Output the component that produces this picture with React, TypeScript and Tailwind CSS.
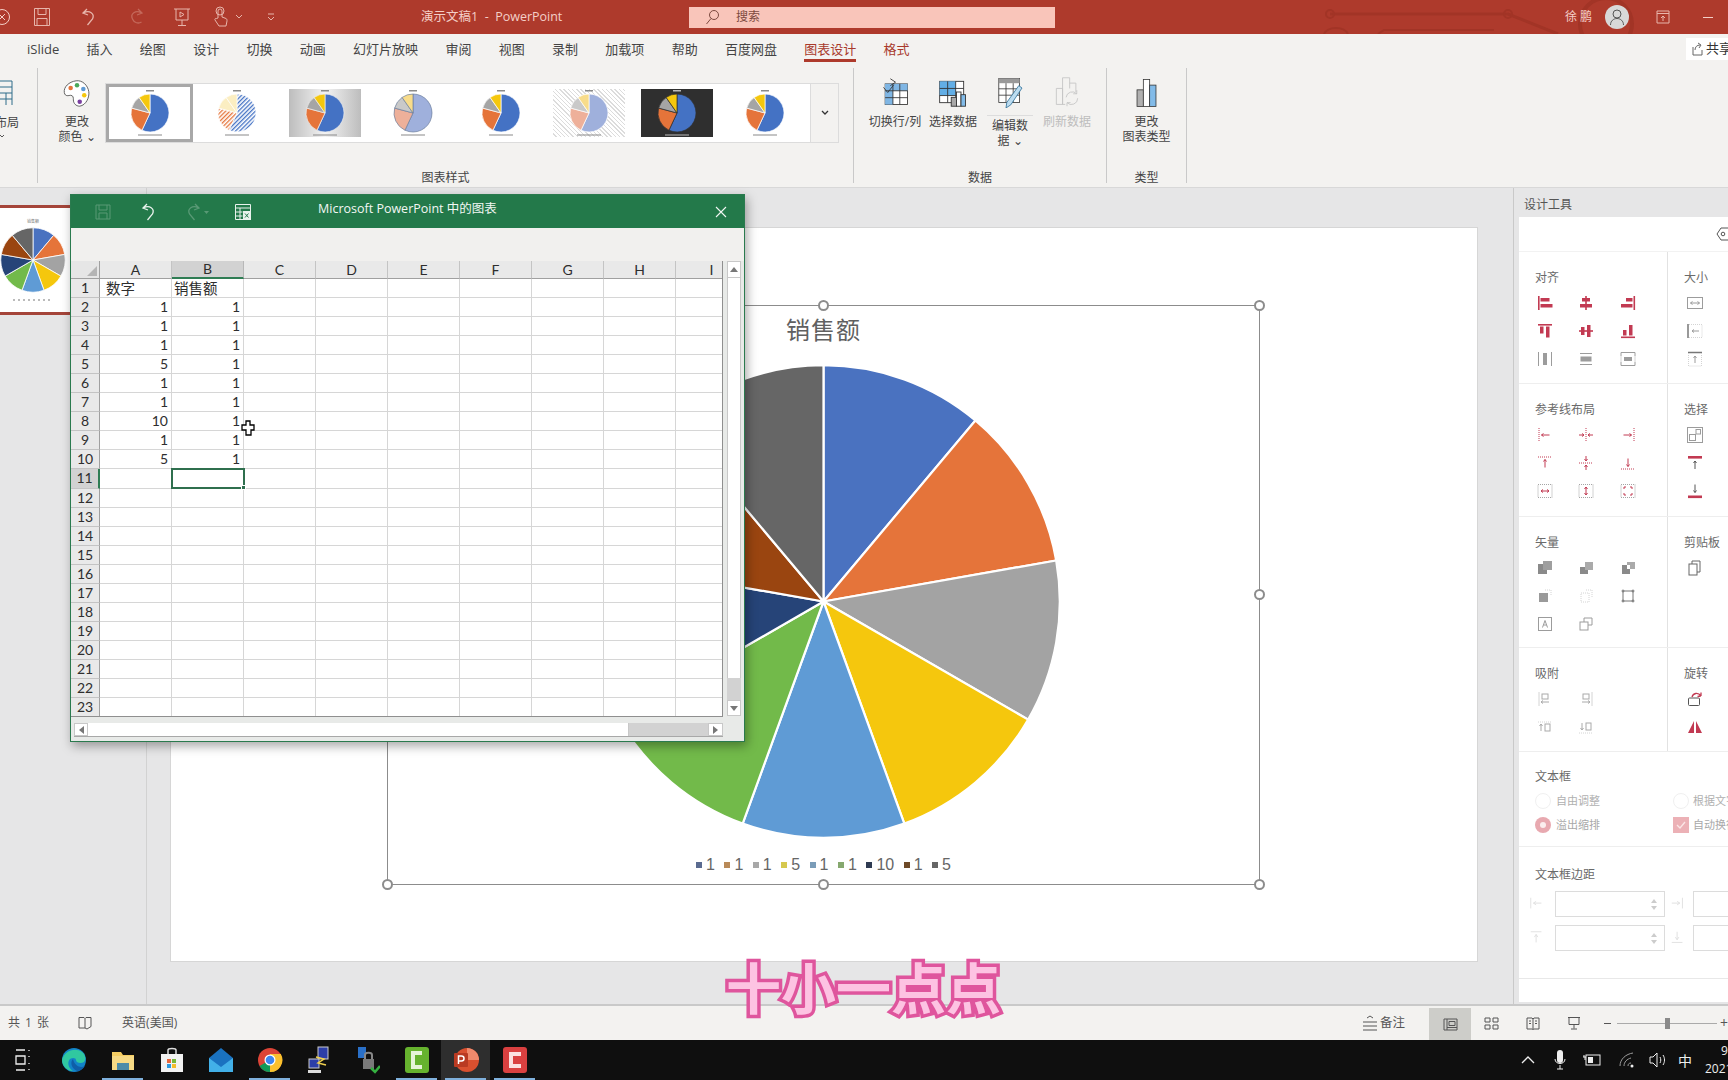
import React from 'react';

const TABS = ['iSlide', '插入', '绘图', '设计', '切换', '动画', '幻灯片放映', '审阅', '视图', '录制', '加载项', '帮助', '百度网盘'];
const PIE_COLORS = ['#4a72c0', '#e5743a', '#a3a3a3', '#f5c70d', '#5f9bd5', '#72ba4a', '#264478', '#9a4510', '#666666'];
const LEGEND = [
  ['1', 'bg-[#5a6b90]'], ['1', 'bg-[#b98a58]'], ['1', 'bg-[#a8a8a8]'], ['5', 'bg-[#d6c84e]'], ['1', 'bg-[#7a9cb8]'],
  ['1', 'bg-[#86a86e]'], ['10', 'bg-[#2f3b52]'], ['1', 'bg-[#6e4a28]'], ['5', 'bg-[#666666]'],
];
const COLUMNS = ['A', 'B', 'C', 'D', 'E', 'F', 'G', 'H', 'I'];
const COL_A = ['数字', '1', '1', '1', '5', '1', '1', '10', '1', '5'];
const COL_B = ['销售额', '1', '1', '1', '1', '1', '1', '1', '1', '1'];
const ROWS = Array.from({ length: 23 }, (_, i) => i + 1);

const R = '#c23a52';
const G = '#9c9c9c';
const L = '#d4d4d4';

function slicePath(cx: number, cy: number, r: number, from: number, to: number) {
  const a = ((from - 90) * Math.PI) / 180;
  const b = ((to - 90) * Math.PI) / 180;
  const large = to - from > 180 ? 1 : 0;
  return `M${cx} ${cy}L${cx + r * Math.cos(a)} ${cy + r * Math.sin(a)}A${r} ${r} 0 ${large} 1 ${cx + r * Math.cos(b)} ${cy + r * Math.sin(b)}Z`;
}

function NinePie({ size, line }: { size: number; line: number }) {
  const c = size / 2;
  return (
    <svg width={size} height={size} className="block">
      {PIE_COLORS.map((color, i) => (
        <path key={color} d={slicePath(c, c, c - line, i * 40, (i + 1) * 40)} fill={color} stroke="#fff" strokeWidth={line} />
      ))}
    </svg>
  );
}

function MiniPie({ r = 19, faded = false, striped = false, edge, mark = '#8a8a8a' }: { r?: number; faded?: boolean; striped?: boolean; edge?: string; mark?: string }) {
  const parts = [
    [0, 205, faded ? '#9fb0dc' : '#4472c4'],
    [205, 285, faded ? '#eeb09a' : '#e5743a'],
    [285, 325, faded ? '#c9c9c9' : '#a5a5a5'],
    [325, 360, faded ? '#f8dc8a' : '#f5c70d'],
  ] as [number, number, string][];
  const c = 24;
  return (
    <svg width={48} height={48} className="block">
      <defs>
        <pattern id="stripes" width="3" height="3" patternUnits="userSpaceOnUse" patternTransform="rotate(45)">
          <rect width="3" height="3" fill="#fff" />
          <rect width="1.3" height="3" fill="#4472c4" />
        </pattern>
        <pattern id="stripesOrange" width="3" height="3" patternUnits="userSpaceOnUse" patternTransform="rotate(45)">
          <rect width="3" height="3" fill="#fff" />
          <rect width="1.3" height="3" fill="#e5743a" />
        </pattern>
      </defs>
      <rect x="20" y="1" width="8" height="1.5" fill={mark} />
      <rect x="12" y="45.5" width="24" height="1" fill={mark} />
      {parts.map(([a, b, color]) => (
        <path key={a} d={slicePath(c, c, r, a, b)} fill={striped ? (a === 0 ? 'url(#stripes)' : a === 205 ? 'url(#stripesOrange)' : '#fbeec2') : color} stroke={edge ?? '#fff'} strokeWidth="0.7" />
      ))}
    </svg>
  );
}

function GalleryItem({ box, children }: { box: string; children: React.ReactNode }) {
  return <div className="w-[88px] h-full flex items-center justify-center shrink-0"><div className={`w-[72px] h-[48px] flex items-center justify-center ${box}`}>{children}</div></div>;
}

function Ic({ children, size = 18 }: { children: React.ReactNode; size?: number }) {
  return <svg width={size} height={size} viewBox="0 0 18 18" fill="none" className="block">{children}</svg>;
}

const ALIGN_ICONS = [
  <><rect x="2" y="2" width="1.6" height="14" fill={R} /><rect x="4.5" y="4" width="9" height="3.5" fill={R} /><rect x="4.5" y="10" width="12" height="3.5" fill={R} /></>,
  <><rect x="8.2" y="2" width="1.6" height="14" fill={R} /><rect x="5" y="4" width="8" height="3.5" fill={R} /><rect x="3" y="10" width="12" height="3.5" fill={R} /></>,
  <><rect x="14.5" y="2" width="1.6" height="14" fill={R} /><rect x="7" y="4" width="6.5" height="3.5" fill={R} /><rect x="2" y="10" width="11.5" height="3.5" fill={R} /></>,
  <><rect x="2" y="2" width="14" height="1.6" fill={R} /><rect x="4" y="4.5" width="3.5" height="7" fill={R} /><rect x="10" y="4.5" width="3.5" height="11" fill={R} /></>,
  <><rect x="2" y="8.2" width="14" height="1.6" fill={R} /><rect x="4" y="5" width="3.5" height="8" fill={R} /><rect x="10" y="3" width="3.5" height="12" fill={R} /></>,
  <><rect x="2" y="14.5" width="14" height="1.6" fill={R} /><rect x="4" y="8" width="3.5" height="5.5" fill={R} /><rect x="10" y="3" width="3.5" height="10.5" fill={R} /></>,
  <><path d="M2.5 2v14M15.5 2v14" stroke={G} /><rect x="7" y="3" width="4" height="12" fill={G} /></>,
  <><path d="M3 3.5h12M3 14.5h12" stroke={G} /><rect x="3.5" y="6.5" width="11" height="5" fill={G} /></>,
  <><path d="M2 6V2.5h14V6M2 12v3.5h14V12" stroke={G} /><path d="M2 6v6M16 6v6" stroke={L} /><rect x="5" y="7" width="8" height="4" fill={G} /></>,
];
const SIZE_ICONS = [
  <><rect x="1.5" y="3.5" width="15" height="11" stroke={G} /><path d="M4.5 9h9M4.5 9l2-1.5M4.5 9l2 1.5M13.5 9l-2-1.5M13.5 9l-2 1.5" stroke={G} /></>,
  <><path d="M2 2v14" stroke="#777" strokeWidth="1.5" /><path d="M3 2.5h13v13H3" stroke={L} strokeDasharray="1 1" /><path d="M6 9h7M6 9l2-1.5M6 9l2 1.5" stroke={G} /></>,
  <><path d="M2 2.5h14" stroke="#777" strokeWidth="1.5" /><path d="M2.5 3v13h13V3" stroke={L} strokeDasharray="1 1" /><path d="M9 6v7M9 6L7.5 8M9 6l1.500 2" stroke={G} /></>,
];
const GUIDE_ICONS = [
  <><path d="M3 2v14" stroke={R} strokeDasharray="1 1" /><path d="M5.5 9h8M5.5 9l2-1.5M5.5 9l2 1.5" stroke={R} /></>,
  <><path d="M9 2v14" stroke={R} strokeDasharray="1 1" /><path d="M2 9h5M7 9L5 7.5M7 9l-2 1.5M16 9h-5M11 9l2-1.5M11 9l2 1.5" stroke={R} /></>,
  <><path d="M15 2v14" stroke={R} strokeDasharray="1 1" /><path d="M4.5 9h8M12.5 9l-2-1.5M12.5 9l-2 1.5" stroke={R} /></>,
  <><path d="M2 3h14" stroke={R} strokeDasharray="1 1" /><path d="M9 5.5v8M9 5.5L7.5 7.5M9 5.5l1.5 2" stroke={R} /></>,
  <><path d="M2 9h14" stroke={R} strokeDasharray="1 1" /><path d="M9 2v5M9 7L7.5 5M9 7l1.5-2M9 16v-5M9 11l-1.5 2M9 11l1.5 2" stroke={R} /></>,
  <><path d="M2 15h14" stroke={R} strokeDasharray="1 1" /><path d="M9 4.5v8M9 12.5l-1.5-2M9 12.5l1.5-2" stroke={R} /></>,
  <><rect x="2" y="2.5" width="14" height="13" stroke="#a5a5a5" strokeDasharray="1 1" /><path d="M5 9h8M5 9l2-1.5M5 9l2 1.5M13 9l-2-1.5M13 9l-2 1.5" stroke={R} /></>,
  <><rect x="2" y="2.5" width="14" height="13" stroke="#a5a5a5" strokeDasharray="1 1" /><path d="M9 5v8M9 5L7.5 7M9 5l1.5 2M9 13l-1.5-2M9 13l1.5-2" stroke={R} /></>,
  <><rect x="2" y="2.5" width="14" height="13" stroke="#a5a5a5" strokeDasharray="1 1" /><path d="M5 7V5h2M13 7V5h-2M5 11v2h2M13 11v2h-2" stroke={R} /></>,
];
const SELECT_ICONS = [
  <><rect x="1.5" y="1.5" width="15" height="15" stroke={G} /><rect x="3.5" y="8.5" width="6" height="6" stroke={G} /><rect x="10" y="3.5" width="4.5" height="4.5" stroke={G} /></>,
  <><rect x="2" y="2" width="14" height="2.6" fill={R} /><path d="M9 7v8M9 7L7.5 9M9 7l1.5 2" stroke="#555" /></>,
  <><rect x="2" y="13.5" width="14" height="2.6" fill={R} /><path d="M9 2.5v8M9 10.5L7.5 8.5M9 10.5l1.5-2" stroke="#555" /></>,
];
const VECTOR_ICONS = [
  <><rect x="2" y="5" width="9" height="10" fill="#8a8a8a" /><rect x="7" y="2" width="9" height="9" fill="#9f9f9f" /></>,
  <><rect x="3" y="8" width="8" height="7" fill="#8a8a8a" /><rect x="8" y="3" width="8" height="8" fill="#aaaaaa" /></>,
  <><rect x="3" y="6" width="8" height="9" fill="#8a8a8a" /><rect x="8" y="3" width="8" height="7" fill="#aaaaaa" /><rect x="8" y="6" width="3" height="4" fill="#fff" /></>,
  <><rect x="3" y="6" width="9" height="9" fill="#9a9a9a" /><path d="M9 3h6v6" stroke={L} strokeDasharray="1 1" /></>,
  <><rect x="4" y="6" width="8" height="9" stroke={L} strokeDasharray="1 1" /><path d="M9 3h6v7" stroke={L} strokeDasharray="1 1" /></>,
  <><rect x="4" y="4" width="10" height="10" stroke="#777" /><path d="M2.5 4h3M12.5 4h3M2.5 14h3M12.5 14h3M4 2.5v3M14 2.5v3M4 12.5v3M14 12.5v3" stroke="#777" /></>,
  <><rect x="2.5" y="2.5" width="13" height="13" stroke={G} /><path d="M6.5 12.5L9 5.5l2.5 7M7.5 10h3" stroke={G} /></>,
  <><rect x="3" y="7" width="8" height="8" stroke={G} /><path d="M7 7V3h8v7h-4" stroke={G} /></>,
];
const SNAP_ICONS = [
  <><path d="M3 2v14" stroke={L} /><rect x="6" y="4" width="6" height="5" stroke="#aaa" /><path d="M5 12h8M5 12l2-1.5M5 12l2 1.5" stroke="#aaa" /></>,
  <><path d="M15 2v14" stroke={L} /><rect x="6" y="4" width="6" height="5" stroke="#aaa" /><path d="M5 12h8M13 12l-2-1.5M13 12l-2 1.5" stroke="#aaa" /></>,
  <><path d="M2 4h14" stroke={L} strokeDasharray="1 1" /><rect x="9" y="6" width="5" height="7" stroke="#aaa" /><path d="M5 6v7M5 6L3.5 8M5 6l1.5 2" stroke="#aaa" /></>,
  <><path d="M2 15h14" stroke={L} strokeDasharray="1 1" /><rect x="9" y="5" width="5" height="7" stroke="#aaa" /><path d="M5 5v7M5 12l-1.5-2M5 12l1.5-2" stroke="#aaa" /></>,
];
const ROTATE_ICONS = [
  <><rect x="2.5" y="8" width="11" height="7.5" rx="1" stroke="#555" /><path d="M6 7c1-4 6-5 9-1M15 6V2.5M15 6l-3.5.5" stroke={R} strokeWidth="1.3" /></>,
  <><path d="M8 3v12H2zM10 3v12h6z" fill={R} /></>,
];

function IconGrid({ icons, cols, pad }: { icons: React.ReactNode[]; cols: string; pad: string }) {
  return (
    <div className={`grid auto-rows-[28px] ${cols} ${pad}`}>
      {icons.map((icon, i) => <div key={i} className="flex items-center justify-center"><Ic>{icon}</Ic></div>)}
    </div>
  );
}

function ToolSection({ h, title, icons, title2, icons2 }: { h: string; title: string; icons: React.ReactNode[]; title2: string; icons2: React.ReactNode[] }) {
  return (
    <div className={`flex border-b border-[#eeeeee] shrink-0 ${h}`}>
      <div className="w-[149px] shrink-0 border-r border-[#e2e2e2] pt-[17px]">
        <div className="pl-[16px] h-[18px] leading-[18px] text-[12px] text-[#6a6a6a]">{title}</div>
        <IconGrid icons={icons} cols="grid-cols-[41.5px_41.5px_41.5px]" pad="pl-[5px] mt-[2px]" />
      </div>
      <div className="flex-1 pt-[17px]">
        <div className="pl-[16px] h-[18px] leading-[18px] text-[12px] text-[#6a6a6a]">{title2}</div>
        <IconGrid icons={icons2} cols="grid-cols-[41.5px]" pad="pl-[6px] mt-[2px]" />
      </div>
    </div>
  );
}

function Spin({ left, w, slot }: { left: React.ReactNode; w: string; slot: string }) {
  return (
    <div className="flex items-center shrink-0">
      <div className={slot}><Ic size={16}>{left}</Ic></div>
      <div className={`h-[26px] border border-[#dcdcdc] flex flex-col items-end justify-center pr-[7px] gap-[3px] ${w}`}>
        <div className="w-0 h-0 border-x-[3px] border-x-transparent border-b-[4px] border-b-[#cccccc]" />
        <div className="w-0 h-0 border-x-[3px] border-x-transparent border-t-[4px] border-t-[#cccccc]" />
      </div>
    </div>
  );
}

function DesignPanel() {
  return (
    <div className="w-[215px] shrink-0 border-l border-[#c9c9c9] pl-[5px] flex flex-col h-full overflow-hidden">
      <div className="h-[29px] leading-[34px] pl-[5px] text-[12px] text-[#555555] shrink-0">设计工具</div>
      <div className="bg-white flex-1 flex flex-col min-h-0 mb-[2px]">
        <div className="h-[35px] flex items-center justify-end border-b border-[#f2f2f2] shrink-0 overflow-hidden">
          <svg width="12" height="16" viewBox="0 0 12 16" fill="none" className="block"><path d="M12 2H5L1 8l4 6h7" stroke="#555" /><circle cx="7" cy="8" r="1.8" stroke="#555" /></svg>
        </div>
        <ToolSection h="h-[132px]" title="对齐" icons={ALIGN_ICONS} title2="大小" icons2={SIZE_ICONS} />
        <ToolSection h="h-[133px]" title="参考线布局" icons={GUIDE_ICONS} title2="选择" icons2={SELECT_ICONS} />
        <ToolSection h="h-[131px]" title="矢量" icons={VECTOR_ICONS} title2="剪贴板" icons2={[<><rect x="3" y="5" width="8" height="11" stroke="#666" /><path d="M6 5V2h8v11h-3" stroke="#666" /></>]} />
        <ToolSection h="h-[104px]" title="吸附" icons={[SNAP_ICONS[0], SNAP_ICONS[1], <></>, SNAP_ICONS[2], SNAP_ICONS[3]]} title2="旋转" icons2={ROTATE_ICONS} />
        <div className="h-[95px] border-b border-[#eeeeee] pt-[16px] pl-[16px] shrink-0 overflow-hidden">
          <div className="h-[18px] leading-[18px] text-[12px] text-[#6a6a6a]">文本框</div>
          <div className="flex items-center h-[24px] mt-[3px] text-[11px] text-[#b0b0b0] w-[300px]">
            <div className="w-[16px] h-[16px] rounded-full border border-[#f0f0f0] shrink-0" />
            <span className="ml-[5px] w-[117px] shrink-0">自由调整</span>
            <div className="w-[16px] h-[16px] rounded-full border border-[#f0f0f0] shrink-0" />
            <span className="ml-[4px] whitespace-nowrap">根据文字调整</span>
          </div>
          <div className="flex items-center h-[24px] text-[11px] text-[#a8a8a8] w-[300px]">
            <div className="w-[16px] h-[16px] rounded-full bg-[#e8a9b0] flex items-center justify-center shrink-0"><div className="w-[6px] h-[6px] rounded-full bg-[#fbeeee]" /></div>
            <span className="ml-[5px] w-[117px] shrink-0">溢出缩排</span>
            <div className="w-[16px] h-[16px] bg-[#ecb1b6] flex items-center justify-center shrink-0">
              <svg width="12" height="12" viewBox="0 0 12 12" fill="none"><path d="M2 6l3 3 5-6" stroke="#fbe6e6" strokeWidth="1.4" /></svg>
            </div>
            <span className="ml-[4px] whitespace-nowrap">自动换行</span>
          </div>
        </div>
        <div className="h-[132px] border-b border-[#e8e8e8] pt-[19px] shrink-0 overflow-hidden">
          <div className="pl-[16px] h-[18px] leading-[18px] text-[12px] text-[#6a6a6a]">文本框边距</div>
          <div className="flex mt-[7px] w-[320px]">
            <Spin slot="w-[36px] pl-[10px]" w="w-[110px]" left={<path d="M2 2v12M14 8H5M5 8l3-2M5 8l3 2" stroke="#dedede" />} />
            <Spin slot="w-[28px] pl-[5px]" w="w-[110px]" left={<path d="M14 2v12M2 8h9M11 8L8 6M11 8l-3 2" stroke="#dedede" />} />
          </div>
          <div className="flex mt-[8px] w-[320px]">
            <Spin slot="w-[36px] pl-[10px]" w="w-[110px]" left={<path d="M2 2h12M8 14V5M8 5L6 8M8 5l2 3" stroke="#dedede" />} />
            <Spin slot="w-[28px] pl-[5px]" w="w-[110px]" left={<path d="M2 14h12M8 2v9M8 11L6 8M8 11l2-3" stroke="#dedede" />} />
          </div>
        </div>
      </div>
    </div>
  );
}

function ExcelWindow() {
  return (
    <div className="absolute left-[70px] top-[194px] w-[675px] h-[548px] bg-[#e8eae8] border border-[#2a7a4e] shadow-[2px_4px_10px_rgba(0,0,0,0.35)] flex flex-col font-['Lato','Noto_Sans_CJK_SC',sans-serif]">
      <div className="h-[33px] bg-[#23794a] flex items-center shrink-0 text-[#f2f7f4] relative">
        <div className="ml-[23px] opacity-30"><svg width="18" height="18" viewBox="0 0 18 18" fill="none"><path d="M2 2h14v14H2zM5 2v5h8V2M5 16v-6h8v6" stroke="#d5e5da" /></svg></div>
        <div className="ml-[28px]"><svg width="18" height="20" viewBox="0 0 18 20" fill="none"><path d="M7 2L3 6l5 2M3.5 6c6-3.5 11.500 1 9 6l-5 6" stroke="#e8f2ec" strokeWidth="1.3" /></svg></div>
        <div className="ml-[26px] opacity-30"><svg width="28" height="20" viewBox="0 0 28 20" fill="none"><path d="M11 2l4 4-5 2M14.500 6C8.500 2.500 3 7 5.500 12l5 6" stroke="#d5e5da" strokeWidth="1.3" /><path d="M20 9h5l-2.500 3z" fill="#d5e5da" /></svg></div>
        <div className="ml-[22px]"><svg width="18" height="18" viewBox="0 0 18 18" fill="none"><path d="M1.500 1.500h15v15h-15zM1.500 5h15M1.500 9h7M1.500 13h7M6 5v11" stroke="#e8f2ec" /><rect x="9" y="8" width="8" height="9" fill="#e8f2ec" /><path d="M11 10.500l3.500 4M14.500 10.500l-3.500 4" stroke="#23794a" /></svg></div>
        <div className="absolute left-[247px] top-[5px] text-[12.5px] font-['Open_Sans','Noto_Sans_CJK_SC',sans-serif] whitespace-nowrap">Microsoft PowerPoint 中的图表</div>
        <div className="ml-auto mr-[17px]"><svg width="12" height="12" viewBox="0 0 12 12" fill="none"><path d="M1 1l10 10M11 1L1 11" stroke="#f2f7f4" strokeWidth="1.1" /></svg></div>
      </div>
      <div className="h-[33px] bg-[#f1f0ee] shrink-0" />
      <div className="flex h-[456px] bg-white shrink-0">
        <div className="w-[652px] h-full overflow-hidden relative border-r border-b border-[#8f8f8f]">
          <div className="grid grid-cols-[29px_repeat(9,72px)] grid-rows-[18px] auto-rows-[19.05px] w-[680px] text-[14px] text-[#2e2e2e]">
            <div className="bg-[#e6e6e6] border-r border-b border-[#a0a0a0] flex items-end justify-end pr-[2px] pb-[2px]">
              <div className="w-0 h-0 border-l-[10px] border-l-transparent border-b-[10px] border-b-[#b5b5b5]" />
            </div>
            {COLUMNS.map((c) => (
              <div key={c} className={c === 'B' ? 'bg-[#d2d2d2] border-r border-[#b8b8b8] border-b-2 border-b-[#2f7d54] flex items-center justify-center leading-none' : 'bg-[#e9e9e9] border-r border-[#c4c4c4] border-b border-b-[#a0a0a0] flex items-center justify-center leading-none'}>{c}</div>
            ))}
            {ROWS.map((row) => (
              <React.Fragment key={row}>
                <div className={row === 11 ? 'bg-[#d2d2d2] border-b border-[#c4c4c4] border-r-2 border-r-[#2f7d54] flex items-center justify-center leading-none' : 'bg-[#e9e9e9] border-b border-[#c4c4c4] border-r border-r-[#a0a0a0] flex items-center justify-center leading-none'}>{row}</div>
                {COLUMNS.map((c) => {
                  const source = c === 'A' ? COL_A : c === 'B' ? COL_B : null;
                  const text = source && row <= 10 ? source[row - 1] : '';
                  const align = row === 1 ? (c === 'A' ? 'pl-[6px] justify-start' : 'pl-[2px] justify-start') : 'pr-[3px] justify-end';
                  return (
                    <div key={c} className={`border-r border-b border-[#d6d6d6] flex items-center leading-none ${align}`}>
                      <span className={row === 1 ? "text-[14.5px] font-['Noto_Sans_CJK_SC',sans-serif]" : ''}>{text}</span>
                    </div>
                  );
                })}
              </React.Fragment>
            ))}
          </div>
          <div className="absolute left-[100px] top-[207px] w-[74px] h-[21px] border-2 border-[#2f6f4e]">
            <div className="absolute -right-[3px] -bottom-[3px] w-[5px] h-[5px] bg-[#2f6f4e] border border-white" />
          </div>
          <svg width="14" height="16" viewBox="0 0 14 16" className="absolute left-[170px] top-[159px]"><path d="M5 1h4v4h4v5h-3v5H5v-5H1V5h4z" fill="#fff" stroke="#000" strokeWidth="1.3" /></svg>
        </div>
        <div className="flex-1 bg-[#e8eae8] pl-[4px] pr-[3px] flex flex-col">
          <div className="h-[17px] bg-white border border-[#c8c8c8] flex items-center justify-center"><div className="w-0 h-0 border-x-[4px] border-x-transparent border-b-[5px] border-b-[#777777]" /></div>
          <div className="h-[400px] bg-white border-x border-[#c8c8c8]" />
          <div className="flex-1 bg-[#d2d2d2]" />
          <div className="h-[16px] bg-white border border-[#c8c8c8] flex items-center justify-center mb-[1px]"><div className="w-0 h-0 border-x-[4px] border-x-transparent border-t-[5px] border-t-[#777777]" /></div>
        </div>
      </div>
      <div className="flex h-[14px] ml-[3px] w-[649px] mt-[6px] shrink-0 border-b border-[#a8a8a8]">
        <div className="w-[14px] bg-white border border-[#c8c8c8] flex items-center justify-center"><div className="w-0 h-0 border-y-[4px] border-y-transparent border-r-[5px] border-r-[#777777]" /></div>
        <div className="w-[541px] bg-white border-r border-[#c8c8c8]" />
        <div className="flex-1 bg-[#d2d2d2]" />
        <div className="w-[15px] bg-white border border-[#c8c8c8] flex items-center justify-center"><div className="w-0 h-0 border-y-[4px] border-y-transparent border-l-[5px] border-l-[#777777]" /></div>
      </div>
    </div>
  );
}

function Handle({ pos }: { pos: string }) {
  return <div className={`absolute w-[11px] h-[11px] rounded-full bg-white border-2 border-[#8c8c8c] ${pos}`} />;
}

function TitleBar() {
  const W = '#e7b5ab';
  return (
    <div className="h-[34px] bg-[#ae3a2c] flex items-center relative overflow-hidden shrink-0 text-[#f4cfc7]">
      <svg width="420" height="34" viewBox="0 0 420 34" fill="none" className="absolute left-[1308px] top-0">
        <path d="M22 14H200L250 34" stroke="#a23426" strokeWidth="3" /><circle cx="22" cy="14" r="4" stroke="#a23426" strokeWidth="2" /><circle cx="200" cy="14" r="4" stroke="#a23426" strokeWidth="2" />
        <path d="M16 34c4-8 20-8 24 0M70 34l6-4h110" stroke="#a23426" strokeWidth="2" /><circle cx="298" cy="24" r="26" stroke="#a23426" strokeWidth="4" />
      </svg>
      <div className="w-[18px] h-[34px] overflow-hidden flex items-center justify-end shrink-0 relative">
        <svg width="18" height="18" viewBox="0 0 18 18" fill="none" className="absolute -left-[7px]"><circle cx="9" cy="9" r="7.5" stroke="#f4cfc7" /><path d="M6 6l6 6M12 6l-6 6" stroke="#f4cfc7" /></svg>
      </div>
      <div className="w-[47px] flex justify-center shrink-0"><svg width="18" height="20" viewBox="0 0 18 20" fill="none"><path d="M1.500 1.500h15v17h-15zM5 1.500v6h8v-6M4 18.500v-7h10v7" stroke={W} /></svg></div>
      <div className="w-[47px] flex justify-center shrink-0"><svg width="18" height="20" viewBox="0 0 18 20" fill="none"><path d="M7 2L3 6l5 2M3.500 6c6-3.500 11.500 1 9 6l-5 6" stroke={W} strokeWidth="1.3" /></svg></div>
      <div className="w-[47px] flex justify-center shrink-0"><svg width="18" height="20" viewBox="0 0 18 20" fill="none"><path d="M11 2l4 4-5 2M14.500 6C8.500 2.500 3 7 5.500 12c1.500 4 6 5 9 3" stroke="#c4685a" strokeWidth="1.3" /></svg></div>
      <div className="w-[46px] flex justify-center shrink-0"><svg width="18" height="20" viewBox="0 0 18 20" fill="none"><path d="M1 2h16M3 2v11h12V2M9 13v5M5 18.500h8" stroke={W} /><path d="M7 5l4 2.500L7 10z" stroke={W} /></svg></div>
      <div className="w-[30px] pl-[6px] shrink-0"><svg width="18" height="22" viewBox="0 0 18 22" fill="none"><path d="M7 12V5a2 2 0 014 0v6l4 1.500c1 .500 1 1.500 1 2.500l-1 5H8l-4-6c-.500-1 .500-2 1.500-1.500z" stroke={W} /><circle cx="9" cy="5" r="4" stroke={W} /></svg></div>
      <svg width="8" height="6" viewBox="0 0 8 6" fill="none" className="shrink-0"><path d="M1 1l3 3 3-3" stroke={W} /></svg>
      <div className="ml-[24px] shrink-0"><svg width="8" height="9" viewBox="0 0 8 9" fill="none"><path d="M1 1h6M1 4l3 3 3-3" stroke={W} /></svg></div>
      <div className="ml-[146px] w-[268px] text-[12.5px] whitespace-nowrap shrink-0">演示文稿1&nbsp; -&nbsp; PowerPoint</div>
      <div className="w-[366px] h-[21px] bg-[#f9c5ba] flex items-center pl-[16px] shrink-0">
        <svg width="14" height="16" viewBox="0 0 14 16" fill="none"><circle cx="9" cy="6" r="4.500" stroke="#7d4a40" /><path d="M6 9.500L1.500 15" stroke="#7d4a40" /></svg>
        <span className="ml-[17px] text-[12px] text-[#7d4a40]">搜索</span>
      </div>
      <div className="ml-[510px] text-[12px] tracking-[3px] whitespace-nowrap shrink-0 relative">徐鹏</div>
      <div className="ml-[10px] w-[24px] h-[24px] rounded-full bg-[#d8d8d8] flex items-center justify-center shrink-0 relative">
        <svg width="16" height="18" viewBox="0 0 16 18" fill="none"><circle cx="8" cy="6" r="4" stroke="#555" /><path d="M1.500 17c0-4 3-6.500 6.500-6.500s6.500 2.500 6.500 6.500" stroke="#555" /></svg>
      </div>
      <div className="ml-[27px] shrink-0 relative"><svg width="14" height="14" viewBox="0 0 14 14" fill="none"><path d="M1 1h12v12H1zM1 3.500h12M7 11V6M7 6L5 8M7 6l2 2" stroke={W} /></svg></div>
      <div className="ml-[33px] w-[10px] h-px bg-[#f4cfc7] shrink-0 relative" />
    </div>
  );
}

function RibbonTabs() {
  return (
    <div className="h-[30px] flex items-stretch pl-[27px] gap-[27.3px] text-[13px] text-[#444444] shrink-0">
      {TABS.map((t) => <div key={t} className="flex items-center pt-[1px] whitespace-nowrap">{t}</div>)}
      <div className="flex items-center pt-[1px] text-[#a8392b] relative whitespace-nowrap">
        图表设计
        <div className="absolute left-0 right-0 top-[25px] h-[3px] bg-[#ae3a2c]" />
      </div>
      <div className="flex items-center pt-[1px] text-[#a8392b] whitespace-nowrap">格式</div>
      <div className="ml-auto mt-[4px] h-[22px] w-[42px] bg-white flex items-center pl-[6px] overflow-hidden shrink-0">
        <svg width="12" height="14" viewBox="0 0 12 14" fill="none" className="shrink-0"><path d="M1 5v8h9V8M3 8c0-3 2-5 5-5M6 1l3 2-2 3" stroke="#666" /></svg>
        <span className="ml-[2px] whitespace-nowrap text-[13px] text-[#333333]">共享</span>
      </div>
    </div>
  );
}

function RibbonBtn({ w, children, label, faded }: { w: string; children: React.ReactNode; label: React.ReactNode; faded?: boolean }) {
  return (
    <div className={`flex flex-col items-center shrink-0 ${w}`}>
      <div className="h-[38px] flex items-end justify-center">{children}</div>
      <div className={`mt-[6px] text-center text-[12px] leading-[15px] whitespace-nowrap ${faded ? 'text-[#bdbdbd]' : 'text-[#444444]'}`}>{label}</div>
    </div>
  );
}

function Ribbon() {
  return (
    <div className="h-[154px] bg-[#f3f2f0] flex flex-col shrink-0 border-b border-[#d8d8d8]">
      <RibbonTabs />
      <div className="flex flex-1 pt-[4px] pb-[4px] min-h-0">
        <div className="w-[38px] border-r border-[#c9c9c9] shrink-0 relative overflow-hidden">
          <svg width="14" height="28" viewBox="0 0 14 28" fill="none" className="mt-[10px]"><path d="M-2 3h14M-2 9h14M-2 15h14M-2 21h14M12 3v24M6 15v12" stroke="#2f6d8a" /></svg>
          <div className="absolute left-[-5px] top-[47px] text-[12px] leading-[15px] text-[#444444] whitespace-nowrap">布局</div>
          <svg width="6" height="5" viewBox="0 0 6 5" fill="none" className="absolute left-0 top-[66px]"><path d="M0 1l2 2 2-2" stroke="#555" /></svg>
        </div>
        <div className="w-[816px] border-r border-[#c9c9c9] shrink-0 flex flex-col">
          <div className="flex flex-1 min-h-0">
            <div className="w-[67px] shrink-0 flex flex-col items-center pt-[11px] pl-[11px]">
              <svg width="30" height="29" viewBox="0 0 32 32" fill="none"><path d="M15 2C7 3 1 9 2 15c1 5 5 3 7 3 3 0 3 3 3 5 0 4 3 7 7 7 7-1 11-10 10-16C28 7 22 1 15 2z" fill="#fff" stroke="#555" /><circle cx="9" cy="10" r="2.500" fill="#e5743a" /><circle cx="16" cy="7" r="2.500" fill="#4aa85a" /><circle cx="23" cy="11" r="2.500" fill="#5f9bd5" /><circle cx="24" cy="18" r="2.500" fill="#f5c70d" /><circle cx="19" cy="25" r="2.500" fill="#7a3fa0" /></svg>
              <div className="mt-[6px] text-center text-[12px] leading-[15px] text-[#444444] whitespace-nowrap">更改<br />颜色 ⌄</div>
            </div>
            <div className="w-[734px] h-[60px] mt-[15px] bg-white border border-[#dcdcdc] flex shrink-0">
              <div className="w-[87px] h-full border-[3px] border-[#a8a8a8] flex items-center justify-center shrink-0 bg-white"><div className="w-[75px] h-[50px] flex items-center justify-center"><MiniPie /></div></div>
              <div className="w-[88px] h-full flex items-center justify-center shrink-0"><MiniPie striped /></div>
              <GalleryItem box="bg-[linear-gradient(90deg,#bdbdbd,#f3f3f3_50%,#bdbdbd)]"><MiniPie edge="#eeeeee" /></GalleryItem>
              <GalleryItem box=""><MiniPie faded edge="#6d7f9e" /></GalleryItem>
              <GalleryItem box=""><MiniPie /></GalleryItem>
              <GalleryItem box="bg-[repeating-linear-gradient(45deg,#ffffff,#ffffff_2px,#dcdcdc_2px,#dcdcdc_3px)]"><MiniPie faded /></GalleryItem>
              <GalleryItem box="bg-[#2f2f2f]"><MiniPie edge="#2f2f2f" mark="#bbbbbb" /></GalleryItem>
              <GalleryItem box=""><MiniPie /></GalleryItem>
              <div className="ml-auto w-[28px] border-l border-[#dcdcdc] bg-[#f3f2f0] flex items-center justify-center shrink-0">
                <svg width="8" height="6" viewBox="0 0 8 6" fill="none"><path d="M1 1l3 3 3-3" stroke="#333" strokeWidth="1.3" /></svg>
              </div>
            </div>
          </div>
          <div className="text-center text-[12px] leading-[16px] text-[#444444] translate-y-[3px]">图表样式</div>
        </div>
        <div className="w-[253px] border-r border-[#c9c9c9] shrink-0 flex flex-col">
          <div className="flex flex-1 pl-[9px] pt-[2px] min-h-0">
            <RibbonBtn w="w-[64px]" label="切换行/列">
              <svg width="31" height="31" viewBox="0 0 32 36" fill="none"><rect x="4" y="8" width="26" height="24" fill="#fff" stroke="#333" /><rect x="4" y="8" width="26" height="8" fill="#7fb6e4" /><rect x="4" y="8" width="9" height="24" fill="#7fb6e4" /><path d="M4 16h26M4 24h26M13 8v24M21 8v24" stroke="#333" /><path d="M2 12l5 6 7-9M10 2l6 4-6 4" stroke="#333" /></svg>
            </RibbonBtn>
            <RibbonBtn w="w-[52px]" label="选择数据">
              <svg width="32" height="32" viewBox="0 0 32 36" fill="none"><rect x="1" y="6" width="27" height="24" fill="#fff" stroke="#333" /><rect x="1" y="6" width="18" height="16" fill="#62aee6" /><path d="M1 14h27M1 22h27M10 6v24M19 6v24" stroke="#333" /><rect x="14" y="24" width="6" height="10" fill="#a8a8a8" stroke="#333" /><rect x="20" y="18" width="5" height="16" fill="#fff" stroke="#333" /><rect x="25" y="21" width="5" height="13" fill="#82bbe8" stroke="#333" /></svg>
            </RibbonBtn>
            <div className="w-[62px] shrink-0 flex flex-col items-center">
              <div className="h-[38px] flex items-end justify-center">
                <svg width="30" height="32" viewBox="0 0 34 40" fill="none"><rect x="3" y="3" width="26" height="30" fill="#fff" stroke="#333" /><rect x="3" y="3" width="26" height="6" fill="#9a9a9a" /><path d="M3 16h26M3 24h26M12 9v24M21 9v24" stroke="#333" /><path d="M28 12l4 3-14 21-6 4 1-7z" fill="#bcdcf0" stroke="#2c6f98" /></svg>
              </div>
              <div className="w-[46px] h-px bg-[#dddddd] mt-[7px]" />
              <div className="mt-[2px] text-center text-[12px] leading-[15px] text-[#444444] whitespace-nowrap">编辑数<br />据 ⌄</div>
            </div>
            <RibbonBtn w="w-[52px]" label="刷新数据" faded>
              <svg width="28" height="32" viewBox="0 0 30 36" fill="none"><path d="M3 32V14h7v18M10 32V2h8v12M18 8h7v10M3 32h10" stroke="#c5c5c5" /><path d="M27 25a7 7 0 01-12 5M14 24a7 7 0 0112-4M26 16v4h-4M15 34v-4h4" stroke="#c5c5c5" /></svg>
            </RibbonBtn>
          </div>
          <div className="text-center text-[12px] leading-[16px] text-[#444444] translate-y-[3px]">数据</div>
        </div>
        <div className="w-[80px] border-r border-[#c9c9c9] shrink-0 flex flex-col">
          <div className="flex-1 flex justify-center pt-[2px] min-h-0">
            <RibbonBtn w="w-[64px]" label={<>更改<br />图表类型</>}>
              <svg width="23" height="30" viewBox="0 0 28 38" fill="none"><rect x="2" y="15" width="8" height="21" fill="#b0b0b0" stroke="#333" /><rect x="10" y="2" width="8" height="34" fill="#fff" stroke="#333" /><rect x="18" y="9" width="8" height="27" fill="#82bbe8" stroke="#333" /></svg>
            </RibbonBtn>
          </div>
          <div className="text-center text-[12px] leading-[16px] text-[#444444] translate-y-[3px]">类型</div>
        </div>
      </div>
    </div>
  );
}

function ThumbPanel() {
  return (
    <div className="w-[147px] shrink-0 border-r border-[#d2d2d2] pt-[17px] overflow-hidden">
      <div className="-ml-[65px] w-[196px] h-[110px] bg-white border-y-[3px] border-[#a5453a] flex flex-col items-center">
        <div className="text-[4px] text-[#777777] h-[19px] pt-[12px] leading-none">销售额</div>
        <div><NinePie size={66} line={0.8} /></div>
        <div className="mt-[6px] w-[40px] h-[2px] bg-[repeating-linear-gradient(90deg,#bbbbbb,#bbbbbb_2px,#ffffff_2px,#ffffff_5px)]" />
      </div>
    </div>
  );
}

function Slide() {
  return (
    <div className="flex-1 min-w-0 pl-[23px] pt-[39px]">
      <div className="w-[1308px] h-[735px] bg-white border border-[#d6d6d6] pl-[216px] pt-[77px]">
        <div className="relative w-[873px] h-[580px] border border-[#8c8c8c] flex flex-col items-center font-['Liberation_Sans','Noto_Sans_CJK_SC',sans-serif]">
          <Handle pos="-left-[6px] -top-[6px]" />
          <Handle pos="left-[430px] -top-[6px]" />
          <Handle pos="-right-[6px] -top-[6px]" />
          <Handle pos="-left-[6px] top-[283px]" />
          <Handle pos="-right-[6px] top-[283px]" />
          <Handle pos="-left-[6px] -bottom-[6px]" />
          <Handle pos="left-[430px] -bottom-[6px]" />
          <Handle pos="-right-[6px] -bottom-[6px]" />
          <div className="mt-[5px] h-[36px] leading-[36px] text-[24px] tracking-[1px] text-[#606060] font-['Noto_Sans_CJK_SC',sans-serif]">销售额</div>
          <div className="mt-[16px]"><NinePie size={477} line={2.2} /></div>
          <div className="mt-[15px] flex items-center gap-[9.5px] text-[16px] leading-[20px] text-[#666666]">
            {LEGEND.map(([n, color], i) => (
              <div key={i} className="flex items-center gap-[4px]"><div className={`w-[6px] h-[6px] ${color}`} />{n}</div>
            ))}
          </div>
        </div>
      </div>
    </div>
  );
}

function StatusBar() {
  const S = '#555';
  return (
    <div className="h-[34px] bg-[#f3f2f0] flex items-center shrink-0 text-[12px] text-[#555555] overflow-hidden whitespace-nowrap">
      <span className="ml-[8px] tracking-[1px] shrink-0">共 1 张</span>
      <svg width="14" height="14" viewBox="0 0 14 14" fill="none" className="ml-[28px] shrink-0"><path d="M1 1.500h5l1 1 1-1h5v9L9 13l-2-1H1zM7 2.500V12" stroke={S} /></svg>
      <span className="ml-[30px] w-[57px] shrink-0">英语(美国)</span>
      <svg width="16" height="16" viewBox="0 0 16 16" fill="none" className="ml-[1183px] shrink-0"><path d="M5 3l3-2 3 2M1 7h14M1 11h14M1 15h14" stroke={S} /></svg>
      <span className="ml-[2px] w-[49px] text-[12.5px] shrink-0">备注</span>
      <div className="w-[42px] h-[32px] bg-[#cdcdc9] flex items-center justify-center mt-[2px] shrink-0">
        <svg width="15" height="13" viewBox="0 0 15 13" fill="none"><path d="M1 1h13v11H1zM4 1v11M6 3.500h6v4H6zM4 9.500h10" stroke={S} /></svg>
      </div>
      <svg width="15" height="13" viewBox="0 0 15 13" fill="none" className="ml-[13px] shrink-0"><path d="M1 1h5v4H1zM9 1h5v4H9zM1 8h5v4H1zM9 8h5v4H9z" stroke={S} /></svg>
      <svg width="14" height="13" viewBox="0 0 14 13" fill="none" className="ml-[27px] shrink-0"><path d="M1 1h5l1 1 1-1h5v11H8l-1 .500L6 12H1zM7 2v10M3 4h2M3 6.500h2M9 4h2M9 6.500h2" stroke={S} /></svg>
      <svg width="14" height="14" viewBox="0 0 14 14" fill="none" className="ml-[27px] shrink-0"><path d="M1 1.500h12M2 1.500v7h10v-7M7 8.500v4M4 13h6" stroke={S} /></svg>
      <div className="ml-[23px] w-[7px] h-px bg-[#555555] shrink-0" />
      <div className="ml-[6px] w-[100px] h-px bg-[#aaaaaa] relative shrink-0">
        <div className="absolute left-[48px] -top-[5px] w-[5px] h-[11px] bg-[#8a8a8a]" />
      </div>
      <span className="ml-[3px] text-[14px] leading-none shrink-0">+</span>
    </div>
  );
}

function TaskIcon({ w = 'w-[49px]', on, active, children }: { w?: string; on?: boolean; active?: boolean; children: React.ReactNode }) {
  return (
    <div className={`${w} h-[40px] flex items-center justify-center relative shrink-0 ${active ? 'bg-[#2e2e2e]' : ''}`}>
      {children}
      {on && <div className="absolute left-[4px] right-[4px] bottom-0 h-[2px] bg-[#7fb0dc]" />}
    </div>
  );
}

function Taskbar() {
  return (
    <div className="h-[40px] bg-[#0f0f0f] flex items-center shrink-0 overflow-hidden relative">
      <div className="ml-[15px] w-[16px] shrink-0"><svg width="16" height="24" viewBox="0 0 16 24" fill="none"><path d="M1 2h9M1 22h9M1 8h9v8H1zM14 2v1M14 8v1M14 15v1M14 21v1" stroke="#eee" strokeWidth="1.300" /></svg></div>
      <div className="ml-[18px] flex">
        <TaskIcon><svg width="26" height="26" viewBox="0 0 26 26"><circle cx="13" cy="13" r="12" fill="#1283c8" /><path d="M1 13C3 4 14 0 21 5c4 3 4 8 2 10-3 2-8 1-8-2 0-2-3-3-6-1-3 3-2 9 3 12C6 24 1 19 1 13z" fill="#30c8a0" /><path d="M12 12c-3 3-2 9 4 12 3 0 6-2 8-5-4 2-10 1-12-7z" fill="#0f5ea8" /></svg></TaskIcon>
        <TaskIcon on><svg width="24" height="24" viewBox="0 0 24 24"><path d="M1 4h9l2 3h11v15H1z" fill="#f5cd62" /><rect x="1" y="8" width="22" height="14" fill="#f7da85" /><rect x="6" y="15" width="12" height="7" fill="#4d8ba8" /></svg></TaskIcon>
        <TaskIcon><svg width="24" height="26" viewBox="0 0 24 26" fill="none"><rect x="1" y="7" width="22" height="18" fill="#f2f2f2" /><path d="M8 7V3c0-2 8-2 8 0v4" stroke="#ddd" strokeWidth="1.500" /><rect x="7" y="12" width="4" height="4" fill="#e8663c" /><rect x="12" y="12" width="4" height="4" fill="#76b83c" /><rect x="7" y="17" width="4" height="4" fill="#2c9ae0" /><rect x="12" y="17" width="4" height="4" fill="#f4bc2c" /></svg></TaskIcon>
        <TaskIcon><svg width="26" height="26" viewBox="0 0 26 26"><path d="M13 1L25 11v14H1V11z" fill="#1a72c0" /><path d="M1 11l12 9 12-9v14H1z" fill="#42b0e8" /></svg></TaskIcon>
        <TaskIcon on><svg width="26" height="26" viewBox="0 0 26 26"><circle cx="13" cy="13" r="12" fill="#dc4437" /><path d="M13 13L2.600 19A12 12 0 0 0 13 25c2 0 4-.500 6-1.600z" fill="#109a58" /><path d="M13 7h10.800A12 12 0 0 1 13 25z" fill="#fbc02d" /><circle cx="13" cy="13" r="5.500" fill="#fff" /><circle cx="13" cy="13" r="4.300" fill="#3f86ee" /></svg></TaskIcon>
        <TaskIcon><svg width="26" height="28" viewBox="0 0 26 28" fill="none"><rect x="12" y="1" width="10" height="12" fill="#2c3ea8" stroke="#ccc" /><rect x="3" y="13" width="10" height="9" fill="#2c3ea8" stroke="#ccc" /><path d="M2 24h13v3H2z" fill="#ddd" /><path d="M10 11l8 2-6 4 8 2" stroke="#f0d050" strokeWidth="1.500" /></svg></TaskIcon>
        <TaskIcon><svg width="24" height="28" viewBox="0 0 24 28" fill="none"><rect x="2" y="1" width="8" height="11" fill="#2a70c8" /><path d="M9 13V9c0-3 7-3 7 0v4" stroke="#888" strokeWidth="2" /><rect x="7" y="13" width="11" height="10" fill="#7a7a7a" /><path d="M15 22l4 4 5-6" stroke="#35b040" strokeWidth="2.500" /></svg></TaskIcon>
        <TaskIcon on><svg width="24" height="26" viewBox="0 0 24 26"><rect width="24" height="26" rx="3" fill="#66b32e" /><path d="M17 6H8v14h9" fill="none" stroke="#e6f4d8" strokeWidth="4" /></svg></TaskIcon>
        <TaskIcon active on><svg width="26" height="26" viewBox="0 0 26 26"><circle cx="14" cy="13" r="12" fill="#d9502f" /><path d="M14 1a12 12 0 0 1 12 12H14z" fill="#f08a6c" /><rect x="1" y="6" width="14" height="14" rx="1" fill="#b93a22" /><path d="M5.500 17V9h3a2.500 2.500 0 010 5h-3" fill="none" stroke="#fff" strokeWidth="1.500" /></svg></TaskIcon>
        <TaskIcon on><svg width="24" height="26" viewBox="0 0 24 26"><rect width="24" height="26" rx="3" fill="#d94040" /><path d="M18 7H8v12h10" fill="none" stroke="#fbe0e0" strokeWidth="4" /></svg></TaskIcon>
      </div>
      <div className="ml-auto flex items-center text-[#eeeeee]">
        <svg width="14" height="8" viewBox="0 0 14 8" fill="none"><path d="M1 7l6-6 6 6" stroke="#eee" strokeWidth="1.300" /></svg>
        <svg width="12" height="20" viewBox="0 0 12 20" className="ml-[19px]" fill="none"><rect x="3" y="0" width="6" height="13" rx="3" fill="#eee" /><path d="M1 9c0 6 10 6 10 0M6 15v4M3 19h6" stroke="#eee" /></svg>
        <svg width="18" height="12" viewBox="0 0 18 12" className="ml-[17px]" fill="none"><rect x="3" y="1" width="14" height="10" stroke="#eee" /><rect x="5" y="3" width="5" height="6" fill="#eee" /><path d="M0 3h3M1 1v2M2 3v3" stroke="#eee" /></svg>
        <svg width="18" height="16" viewBox="0 0 18 16" className="ml-[18px]" fill="none"><path d="M1 14c0-7 6-12 13-13M5 14c0-4 3-7 7-8M9 14c0-2 1-3 3-3" stroke="#9a9a9a" /><circle cx="13" cy="14" r="1.500" fill="#eee" /></svg>
        <svg width="18" height="16" viewBox="0 0 18 16" className="ml-[12px]" fill="none"><path d="M1 5h3l4-4v14l-4-4H1zM11 5c1 2 1 4 0 6M14 3c2 3 2 7 0 10" stroke="#eee" /></svg>
        <span className="ml-[11px] w-[27px] text-[14px] font-['Noto_Sans_CJK_SC',sans-serif]">中</span>
        <div className="w-[23px] text-[12px] leading-[18px] overflow-hidden whitespace-nowrap font-['Open_Sans',sans-serif]">
          <div className="pl-[16px]">9</div>
          <div>2021</div>
        </div>
      </div>
    </div>
  );
}

export default function App() {
  return (
    <div className="w-[1728px] h-[1080px] overflow-hidden flex flex-col relative bg-[#e6e6e6] font-['Open_Sans','Noto_Sans_CJK_SC',sans-serif]">
      <TitleBar />
      <Ribbon />
      <div className="flex flex-1 min-h-0 bg-[#e6e6e7] border-b-2 border-[#c9c9c9]">
        <ThumbPanel />
        <Slide />
        <DesignPanel />
      </div>
      <StatusBar />
      <Taskbar />
      <ExcelWindow />
      <div className="absolute left-[726px] top-[947px] text-[55px] leading-[76px] font-bold whitespace-nowrap text-[#fdc3e2] [-webkit-text-stroke:7px_#df559d] [paint-order:stroke_fill] font-['Noto_Sans_CJK_SC',sans-serif]">十小一点点</div>
    </div>
  );
}
